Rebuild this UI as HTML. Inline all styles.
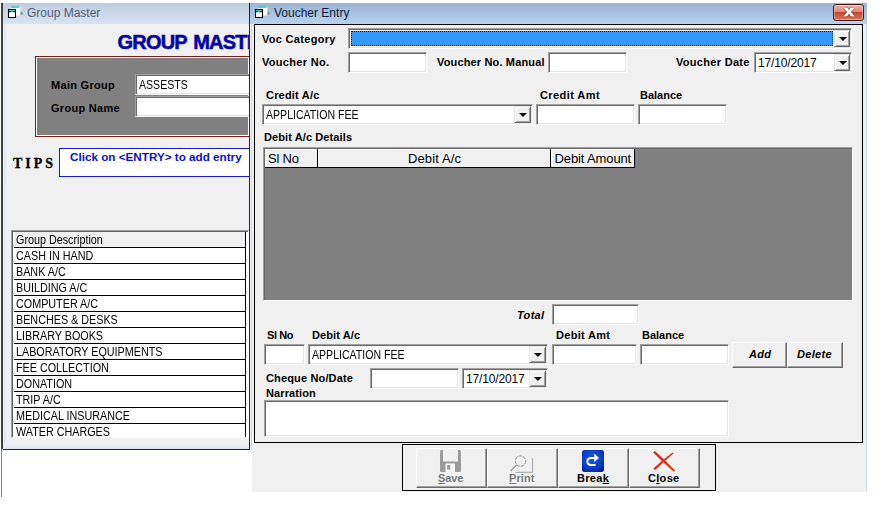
<!DOCTYPE html>
<html><head><meta charset="utf-8"><title>Voucher Entry</title>
<style>
html,body{margin:0;padding:0;background:#fff;}
body{width:884px;height:512px;position:relative;overflow:hidden;font-family:"Liberation Sans",Arial,sans-serif;color:#000;}
.a{position:absolute;box-sizing:border-box;}
.t{position:absolute;white-space:pre;line-height:1;transform-origin:0 0;}
.b{font-weight:bold;}
.ms{font-size:12.5px;transform:scaleX(.845);}
.tb{position:absolute;box-sizing:border-box;background:#fff;border:1px solid;border-color:#a0a0a0 #fff #fff #a0a0a0;box-shadow:inset 1px 1px 0 #696969,inset -1px -1px 0 #e3e3e3;}
.lbl{font-size:11px;font-weight:bold;letter-spacing:.3px;margin-top:1px;}
.dd{position:absolute;box-sizing:border-box;background:#f0f0f0;border:1px solid;border-color:#e3e3e3 #696969 #696969 #e3e3e3;box-shadow:inset 1px 1px 0 #fff,inset -1px -1px 0 #a0a0a0;}
.dd:after{content:"";position:absolute;left:4px;top:50%;margin:-1.5px 0 0 0;border:4px solid transparent;border-top-color:#000;border-bottom:0;}
.btn{position:absolute;box-sizing:border-box;background:#f0f0f0;border:1px solid;border-color:#fff #696969 #696969 #fff;box-shadow:inset -1px -1px 0 #a0a0a0;}
.row{position:absolute;left:14px;width:232px;height:16px;box-sizing:border-box;border:1px solid #000;border-width:0 1px 1px 0;background:#fff;}
</style></head><body>

<!-- far-left strip -->
<div class="a" style="left:1px;top:3px;width:2px;height:446px;background:#404040;"></div>
<div class="a" style="left:1px;top:449px;width:1px;height:48px;background:#808080;"></div>

<!-- Group Master window -->
<div class="a" style="left:3px;top:3px;width:247px;height:447px;background:#f0f0f0;"></div>
<div class="a" style="left:3px;top:3px;width:247px;height:21px;background:linear-gradient(#bccadb,#c5d4e5 25%,#d6e3f1);"></div>
<div class="a" style="left:3px;top:443px;width:247px;height:6px;background:linear-gradient(#f0f0f0,#dce6f3);"></div>
<div class="a" style="left:3px;top:449px;width:247px;height:1px;background:#222;"></div>
<svg class="a" style="left:6px;top:3px;" width="20" height="20" viewBox="0 0 20 20"><rect x="5" y="2.5" width="8" height="3" fill="#55d2c8" opacity=".75"/><rect x="4.5" y="4.5" width="10" height="8" fill="#fff" opacity=".95"/><rect x="5" y="3.5" width="8" height="1.5" fill="#4fd0c6"/><path d="M14.5 8 L17.5 10.5 L14.5 12.5Z" fill="#8a949f"/><rect x="2.5" y="6.5" width="7" height="8" fill="#fff" stroke="#000" stroke-width="1.05"/><rect x="3" y="7" width="6" height="1.2" fill="#2cc4c4"/><rect x="3" y="8.2" width="2.4" height="1" fill="#000"/><rect x="6.4" y="8.2" width="2.6" height="1" fill="#000"/></svg>
<div class="t" style="left:27px;top:7px;font-size:12px;color:#4f5d78;">Group Master</div>
<div class="t b" style="left:117.5px;top:32px;font-size:20px;color:#0303a6;-webkit-text-stroke:.55px #0303a6;letter-spacing:-.8px;word-spacing:2px;">GROUP MASTER</div>

<div class="a" style="left:3px;top:24px;width:3px;height:420px;background:linear-gradient(90deg,#fff,#dbe5f2 50%,#e8eef6);"></div>
<!-- gray panel -->
<div class="a" style="left:35px;top:56px;width:215px;height:81px;background:#808080;border:1px solid #7a1c1c;box-shadow:inset 1px 1px 0 #fff,inset -1px -1px 0 #fff;"></div>
<div class="t b" style="left:51px;top:80px;font-size:11px;letter-spacing:.3px;">Main Group</div>
<div class="t b" style="left:51px;top:103px;font-size:11px;letter-spacing:.3px;">Group Name</div>
<div class="tb" style="left:135px;top:74px;width:120px;height:21px;"></div>
<div class="tb" style="left:135px;top:96px;width:120px;height:21px;"></div>
<div class="t ms" style="left:139px;top:79px;">ASSESTS</div>

<!-- tips -->
<div class="t b" style="left:13px;top:157px;font-size:14px;letter-spacing:3px;-webkit-text-stroke:.3px #000;font-family:'Liberation Serif',serif;">TIPS</div>
<div class="a" style="left:59px;top:148px;width:195px;height:29px;background:#fff;border:1px solid #1a1ac8;"></div>
<div class="t b" style="left:70px;top:151px;font-size:11.7px;color:#1010c8;">Click on &lt;ENTRY&gt; to add entry</div>

<!-- list -->
<div class="a" style="left:11px;top:230px;width:238px;height:208px;background:#fff;border:1px solid;border-color:#a0a0a0 #fff #fff #a0a0a0;box-shadow:inset 1px 1px 0 #606060;"></div>
<div class="row" style="top:232px;background:#f0f0f0;"><div class="t ms" style="left:1.8px;top:2px;transform:scaleX(.862);">Group Description</div></div>
<div class="row" style="top:248px;background:#fff;"><div class="t ms" style="left:1.8px;top:2px;transform:scaleX(.862);">CASH IN HAND</div></div>
<div class="row" style="top:264px;background:#fff;"><div class="t ms" style="left:1.8px;top:2px;transform:scaleX(.862);">BANK A/C</div></div>
<div class="row" style="top:280px;background:#fff;"><div class="t ms" style="left:1.8px;top:2px;transform:scaleX(.862);">BUILDING A/C</div></div>
<div class="row" style="top:296px;background:#fff;"><div class="t ms" style="left:1.8px;top:2px;transform:scaleX(.862);">COMPUTER A/C</div></div>
<div class="row" style="top:312px;background:#fff;"><div class="t ms" style="left:1.8px;top:2px;transform:scaleX(.862);">BENCHES &amp; DESKS</div></div>
<div class="row" style="top:328px;background:#fff;"><div class="t ms" style="left:1.8px;top:2px;transform:scaleX(.862);">LIBRARY BOOKS</div></div>
<div class="row" style="top:344px;background:#fff;"><div class="t ms" style="left:1.8px;top:2px;transform:scaleX(.862);">LABORATORY EQUIPMENTS</div></div>
<div class="row" style="top:360px;background:#fff;"><div class="t ms" style="left:1.8px;top:2px;transform:scaleX(.862);">FEE COLLECTION</div></div>
<div class="row" style="top:376px;background:#fff;"><div class="t ms" style="left:1.8px;top:2px;transform:scaleX(.862);">DONATION</div></div>
<div class="row" style="top:392px;background:#fff;"><div class="t ms" style="left:1.8px;top:2px;transform:scaleX(.862);">TRIP A/C</div></div>
<div class="row" style="top:408px;background:#fff;"><div class="t ms" style="left:1.8px;top:2px;transform:scaleX(.862);">MEDICAL INSURANCE</div></div>
<div class="row" style="top:424px;background:#fff;height:13px;border-bottom:0;overflow:hidden;"><div class="t ms" style="left:1.8px;top:2px;transform:scaleX(.862);">WATER CHARGES</div></div>

<!-- Voucher window -->
<div class="a" style="left:250px;top:3px;width:617px;height:447px;background:#f0f0f0;"></div>
<div class="a" style="left:252px;top:449px;width:615px;height:43px;background:#f0f0f0;"></div>
<div class="a" style="left:249px;top:3px;width:618px;height:21px;background:linear-gradient(#99b3d2,#a3bddb 30%,#bad3ec);"></div>
<div class="a" style="left:249px;top:3px;width:1px;height:447px;background:#222;"></div>
<div class="a" style="left:250px;top:24px;width:1px;height:426px;background:#f4f7fb;"></div><div class="a" style="left:251px;top:24px;width:1px;height:426px;background:#c5d8f0;"></div>
<div class="a" style="left:863px;top:24px;width:4px;height:467px;background:linear-gradient(90deg,#f0f0f0 0,#f0f0f0 70%,#c6d8ee 70%);"></div>
<div class="a" style="left:254px;top:24px;width:609px;height:419px;background:#f0f0f0;border:1px solid #000;"></div>
<svg class="a" style="left:253px;top:3px;" width="20" height="20" viewBox="0 0 20 20"><rect x="5" y="2.5" width="8" height="3" fill="#55d2c8" opacity=".75"/><rect x="4.5" y="4.5" width="10" height="8" fill="#fff" opacity=".95"/><rect x="5" y="3.5" width="8" height="1.5" fill="#4fd0c6"/><path d="M14.5 8 L17.5 10.5 L14.5 12.5Z" fill="#8a949f"/><rect x="2.5" y="6.5" width="7" height="8" fill="#fff" stroke="#000" stroke-width="1.05"/><rect x="3" y="7" width="6" height="1.2" fill="#2cc4c4"/><rect x="3" y="8.2" width="2.4" height="1" fill="#000"/><rect x="6.4" y="8.2" width="2.6" height="1" fill="#000"/></svg>
<div class="t" style="left:274px;top:7px;font-size:12px;color:#0a1836;">Voucher Entry</div>
<!-- close btn -->
<div class="a" style="left:833px;top:4px;width:31px;height:17px;border:1px solid #43161c;border-radius:3px;background:linear-gradient(#efb2a6 0,#de8676 45%,#c8472e 50%,#d9745c 100%);box-shadow:inset 0 0 0 1px rgba(255,255,255,.4);"></div>
<div class="t b" style="left:843.5px;top:3.8px;font-size:14px;color:#fff;-webkit-text-stroke:.5px #fff;text-shadow:0 0 1px #40201c,0 0 1.5px #40201c,0 0 1.5px #40201c;transform:scaleX(1.3);">x</div>


<!-- voucher form -->
<div class="t lbl" style="left:262px;top:33px;">Voc Category</div>
<div class="tb" style="left:348px;top:28px;width:504px;height:21px;"></div>
<div class="a" style="left:351px;top:31px;width:482px;height:15px;background:#3399ff;outline:1px dotted #000;outline-offset:-1px;"></div>
<div class="dd" style="left:834px;top:30px;width:16px;height:17px;"></div>

<div class="t lbl" style="left:262px;top:56px;">Voucher No.</div>
<div class="tb" style="left:348px;top:52px;width:79px;height:21px;"></div>
<div class="t lbl" style="left:437px;top:56px;letter-spacing:.15px;">Voucher No. Manual</div>
<div class="tb" style="left:548px;top:52px;width:79px;height:21px;"></div>
<div class="t lbl" style="left:676px;top:56px;">Voucher Date</div>
<div class="tb" style="left:754px;top:52px;width:98px;height:21px;"></div>
<div class="dd" style="left:834px;top:54px;width:16px;height:17px;"></div>
<div class="t" style="left:758px;top:56px;font-size:12px;letter-spacing:-.15px;margin-top:.5px;">17/10/2017</div>

<div class="t lbl" style="left:266px;top:89px;letter-spacing:.2px;">Credit A/c</div>
<div class="t lbl" style="left:540px;top:89px;letter-spacing:.42px;">Credit Amt</div>
<div class="t lbl" style="left:640px;top:89px;letter-spacing:0;">Balance</div>
<div class="tb" style="left:262px;top:104px;width:271px;height:21px;"></div>
<div class="dd" style="left:514px;top:106px;width:17px;height:17px;"></div>
<div class="t ms" style="left:266px;top:109px;">APPLICATION FEE</div>
<div class="tb" style="left:536px;top:104px;width:99px;height:21px;"></div>
<div class="tb" style="left:638px;top:104px;width:89px;height:21px;"></div>

<div class="t lbl" style="left:264px;top:131px;letter-spacing:.1px;">Debit A/c Details</div>
<!-- grid -->
<div class="a" style="left:263px;top:147px;width:590px;height:154px;background:#808080;border:1px solid;border-color:#a0a0a0 #fff #fff #a0a0a0;box-shadow:inset 1px 1px 0 #696969;"></div>
<div class="a" style="left:265px;top:149px;width:53px;height:19px;background:#f0f0f0;border:1px solid #000;border-width:0 1px 1px 0;box-shadow:inset 1px 1px 0 #fff;"></div>
<div class="a" style="left:318px;top:149px;width:233px;height:19px;background:#f0f0f0;border:1px solid #000;border-width:0 1px 1px 0;box-shadow:inset 1px 1px 0 #fff;"></div>
<div class="a" style="left:551px;top:149px;width:84px;height:19px;background:#f0f0f0;border:1px solid #000;border-width:0 1px 1px 0;box-shadow:inset 1px 1px 0 #fff;"></div>
<div class="t" style="left:268px;top:152px;font-size:13px;letter-spacing:-.2px;">Sl No</div>
<div class="t" style="left:408px;top:152px;font-size:13px;letter-spacing:.12px;">Debit A/c</div>
<div class="t" style="left:554.5px;top:152px;font-size:13px;letter-spacing:-.12px;">Debit Amount</div>

<div class="t lbl" style="left:517px;top:309px;font-style:italic;">Total</div>
<div class="tb" style="left:552px;top:304px;width:87px;height:21px;"></div>

<div class="t lbl" style="left:267px;top:329px;letter-spacing:-.4px;">Sl No</div>
<div class="t lbl" style="left:312px;top:329px;letter-spacing:.1px;">Debit A/c</div>
<div class="t lbl" style="left:556px;top:329px;">Debit Amt</div>
<div class="t lbl" style="left:642px;top:329px;letter-spacing:0;">Balance</div>
<div class="tb" style="left:264px;top:344px;width:41px;height:21px;"></div>
<div class="tb" style="left:308px;top:344px;width:240px;height:21px;"></div>
<div class="dd" style="left:529px;top:346px;width:17px;height:17px;"></div>
<div class="t ms" style="left:312px;top:349px;">APPLICATION FEE</div>
<div class="tb" style="left:552px;top:344px;width:85px;height:21px;"></div>
<div class="tb" style="left:640px;top:344px;width:89px;height:21px;"></div>
<div class="btn" style="left:732px;top:342px;width:55px;height:26px;"></div>
<div class="btn" style="left:787px;top:342px;width:56px;height:26px;"></div>
<div class="t lbl" style="left:749px;top:348px;font-style:italic;font-size:11px;">Add</div>
<div class="t lbl" style="left:797px;top:348px;font-style:italic;font-size:11px;">Delete</div>

<div class="t lbl" style="left:266px;top:372px;letter-spacing:.15px;">Cheque No/Date</div>
<div class="tb" style="left:370px;top:368px;width:89px;height:21px;"></div>
<div class="tb" style="left:462px;top:368px;width:86px;height:21px;"></div>
<div class="dd" style="left:529px;top:370px;width:17px;height:17px;"></div>
<div class="t" style="left:466px;top:372px;font-size:12px;letter-spacing:-.15px;margin-top:.5px;">17/10/2017</div>
<div class="t lbl" style="left:266px;top:387px;letter-spacing:.1px;">Narration</div>
<div class="tb" style="left:264px;top:400px;width:465px;height:37px;"></div>

<!-- toolbar -->
<div class="a" style="left:402px;top:444px;width:314px;height:47px;border:1px solid #000;background:#f0f0f0;"></div>
<div class="btn" style="left:416px;top:448px;width:71px;height:40px;"></div>
<div class="btn" style="left:487px;top:448px;width:71px;height:40px;"></div>
<div class="btn" style="left:558px;top:448px;width:71px;height:40px;"></div>
<div class="btn" style="left:629px;top:448px;width:71px;height:40px;"></div>
<div class="t lbl" style="left:438px;top:472px;color:#767676;text-shadow:1px 1px 0 #fff;letter-spacing:-.1px;"><u>S</u>ave</div>
<div class="t lbl" style="left:509px;top:472px;color:#767676;text-shadow:1px 1px 0 #fff;letter-spacing:.1px;"><u>P</u>rint</div>
<div class="t lbl" style="left:577px;top:472px;">Brea<u>k</u></div>
<div class="t lbl" style="left:648px;top:472px;">C<u>l</u>ose</div>


<!-- toolbar icons -->
<svg class="a" style="left:438px;top:448px;" width="26" height="26" viewBox="0 0 26 26">
<rect x="1.5" y="1.5" width="22" height="23" rx="2" fill="#f8f8f8"/>
<rect x="2" y="2" width="21" height="22" rx="1.5" fill="#9b9b9b"/>
<rect x="5" y="1.5" width="15" height="12" fill="#f0f0f0"/>
<path d="M7.5 24.5V16.5Q7.5 15.5 8.5 15.5H17V24.5Z" fill="#f6f6f6"/>
<rect x="9.2" y="17" width="3" height="4.6" fill="#9b9b9b"/>
</svg>
<svg class="a" style="left:508px;top:452px;" width="28" height="24" viewBox="0 0 28 24">
<circle cx="12.5" cy="9.1" r="5.2" fill="none" stroke="#8e8e8e" stroke-width="1" stroke-dasharray="3.2 1.2"/>
<path d="M8.7 12.9L2.6 19" stroke="#8e8e8e" stroke-width="1.1" fill="none"/>
<path d="M24.6 6.2V20.3H7.4" stroke="#a2a2a2" stroke-width="1" fill="none"/>
</svg>
<svg class="a" style="left:582px;top:450px;" width="22" height="22" viewBox="0 0 22 22">
<defs><radialGradient id="bg" cx="45%" cy="40%" r="70%"><stop offset="0" stop-color="#1a58e4"/><stop offset=".55" stop-color="#0e44cc"/><stop offset="1" stop-color="#04248a"/></radialGradient></defs>
<rect x="0" y="0" width="22" height="22" rx="2.5" fill="url(#bg)"/>
<path d="M13.6 15H8.8a3.5 3.5 0 0 1 0-7H12.5" fill="none" stroke="#fff" stroke-width="1.9"/>
<path d="M12.2 3.6L17 8L12.2 12.1Z" fill="#fff"/>
</svg>
<svg class="a" style="left:651px;top:449px;" width="26" height="25" viewBox="0 0 26 25">
<path d="M2.2 3.4L3.9 1.9L13 10.6L24 21.6L23 22.8L11.4 12.6Z" fill="#db2a12"/>
<path d="M21.6 3.6L22.4 4.6L13 12.8L4 21L2.4 19.6L11.4 11.4Z" fill="#db2a12"/>
</svg>
</body></html>
